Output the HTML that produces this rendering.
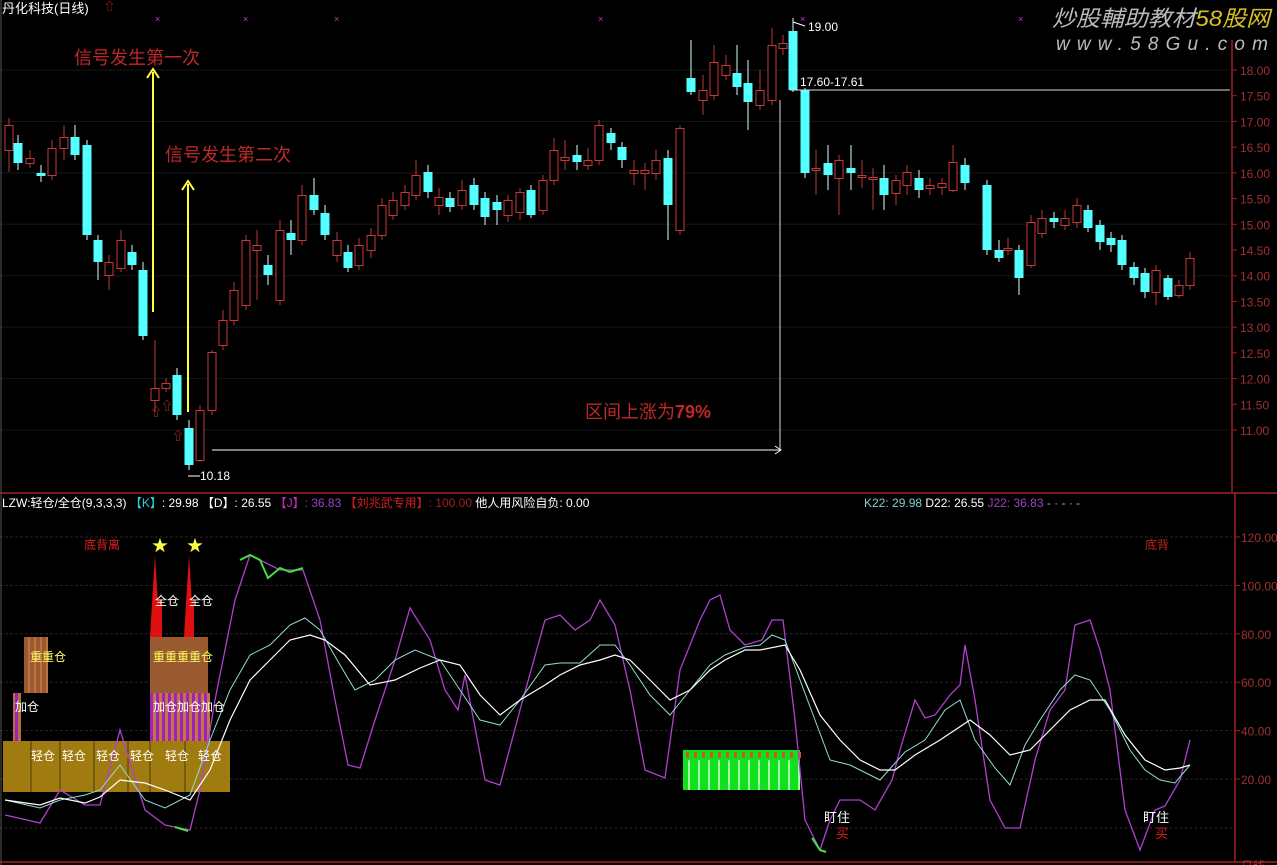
<!DOCTYPE html>
<html><head><meta charset="utf-8"><style>
body{margin:0;background:#000;width:1277px;height:865px;overflow:hidden}
svg{display:block}
text{font-family:"Liberation Sans","Noto Sans CJK SC",sans-serif}
</style></head><body>
<svg id="s" width="1277" height="865" viewBox="0 0 1277 865" xmlns="http://www.w3.org/2000/svg">
<rect width="1277" height="865" fill="#000"/>
<g id="grid"></g>
<line x1="1232" y1="40" x2="1232" y2="492" stroke="#a02020" stroke-width="1.5"/>
<line x1="1235" y1="492" x2="1235" y2="862" stroke="#a02020" stroke-width="1.5"/>
<line x1="0" y1="493" x2="1277" y2="493" stroke="#a02020" stroke-width="1.5"/>
<line x1="0" y1="862" x2="1277" y2="862" stroke="#a02020" stroke-width="1.5"/>
<line x1="1" y1="0" x2="1" y2="865" stroke="#555" stroke-width="1"/>
<g id="c"></g>
<g id="low"></g>
<text x="2" y="13" fill="#fff" font-size="13">丹化科技(日线)</text>
<text x="104" y="10" fill="#d02020" font-size="11">⇧</text>
<g fill="#c040c0" font-size="9"><text x="155" y="22">×</text><text x="243" y="22">×</text><text x="334" y="22">×</text><text x="598" y="22">×</text><text x="1018" y="22">×</text><text x="800" y="22">×</text></g>
<text x="74" y="64" fill="#c02828" font-size="18">信号发生第一次</text>
<text x="165" y="161" fill="#c02828" font-size="18">信号发生第二次</text>
<text x="585" y="418" fill="#c02828" font-size="18">区间上涨为<tspan font-weight="bold">79%</tspan></text>
<line x1="153" y1="72" x2="153" y2="312" stroke="#ffff40" stroke-width="2"/>
<path d="M147 78 L153 69 L159 78" fill="none" stroke="#ffff40" stroke-width="2"/>
<line x1="188" y1="184" x2="188" y2="412" stroke="#ffff40" stroke-width="2"/>
<path d="M182 190 L188 181 L194 190" fill="none" stroke="#ffff40" stroke-width="2"/>
<line x1="212" y1="450" x2="780" y2="450" stroke="#fff" stroke-width="1"/>
<path d="M775 446 L781 450 L775 454" fill="none" stroke="#fff"/>
<line x1="780" y1="100" x2="780" y2="450" stroke="#ddd" stroke-width="1"/>
<line x1="790" y1="90" x2="1230" y2="90" stroke="#ddd" stroke-width="1"/>
<text x="808" y="31" fill="#fff" font-size="12">19.00</text>
<path d="M793 22 L805 26" stroke="#fff"/>
<text x="800" y="86" fill="#fff" font-size="12">17.60-17.61</text>
<text x="200" y="480" fill="#fff" font-size="12">10.18</text>
<path d="M188 476 L200 476" stroke="#fff"/>
<text x="1052" y="26" fill="#bbb" font-size="22" font-style="italic" textLength="218" lengthAdjust="spacingAndGlyphs">炒股輔助教材<tspan fill="#d8c020">58股网</tspan></text>
<text x="1056" y="50" fill="#bbb" font-size="19" font-style="italic" textLength="212" lengthAdjust="spacing">www.58Gu.com</text>
<g id="ax" fill="#a03030" font-size="12"></g>
<text x="2" y="507" font-size="12" fill="#fff">LZW:轻仓/全仓(9,3,3,3) <tspan fill="#30d0d0">【K】</tspan>: 29.98 <tspan fill="#fff">【D】</tspan>: 26.55 <tspan fill="#c030c0">【J】</tspan><tspan fill="#a040c0">: 36.83</tspan> <tspan fill="#d02020">【刘兆武专用】</tspan><tspan fill="#a02020">: 100.00</tspan> 他人用风险自负: 0.00</text>
<text x="864" y="507" font-size="12" fill="#80d0d0">K22: 29.98 <tspan fill="#fff">D22: 26.55</tspan> <tspan fill="#a040c0">J22: 36.83</tspan><tspan fill="#aaa"> - · - · -</tspan></text>
</svg>
<script>
var NS="http://www.w3.org/2000/svg";
function el(p,t,a,txt){var e=document.createElementNS(NS,t);for(var k in a)e.setAttribute(k,a[k]);if(txt)e.textContent=txt;p.appendChild(e);return e;}
var g=document.getElementById('grid'),ax=document.getElementById('ax');
for(var i=0;i<15;i++){var p=18-i*0.5,y=70+(18-p)*51.43;
 if(i%2==0) el(g,'line',{x1:0,y1:y,x2:1230,y2:y,stroke:'#161616'});
 el(ax,'text',{x:1240,y:y+5},p.toFixed(2));el(g,'line',{x1:1232,y1:y,x2:1237,y2:y,stroke:'#a02020'});}
[120,100,80,60,40,20].forEach(function(v){var y=537+(120-v)*2.42;
 el(g,'line',{x1:0,y1:y,x2:1232,y2:y,stroke:'#262626','stroke-dasharray':'3 2'});
 el(ax,'text',{x:1241,y:y+5},v.toFixed(2));el(g,'line',{x1:1235,y1:y,x2:1240,y2:y,stroke:'#a02020'});});
el(g,'line',{x1:0,y1:828,x2:1232,y2:828,stroke:'#602020','stroke-dasharray':'2 3'});
el(ax,'text',{x:1241,y:870},'日线');
var C=[[9,150,125,118,172],[18,143,163,135,170],[30,163,158,150,168],[41,173,176,165,182],[52,175,148,140,180],[64,148,137,125,160],[75,137,155,125,160],[87,145,235,140,240],[98,240,262,235,280],[109,275,262,255,290],[121,268,240,230,272],[132,252,265,245,270],[143,270,336,262,340],[155,400,388,340,412],[166,388,383,378,392],[177,375,415,368,420],[189,428,465,420,470],[200,460,410,405,462],[212,410,352,350,415],[223,345,320,310,350],[234,320,290,282,325],[246,305,240,235,310],[257,250,245,230,300],[268,265,275,255,285],[280,300,230,220,305],[291,233,240,220,255],[302,240,195,185,245],[314,195,210,178,215],[325,213,235,205,240],[337,255,240,232,262],[348,252,268,245,272],[359,265,245,238,270],[371,250,235,228,258],[382,235,205,198,240],[393,215,200,192,220],[405,205,192,185,210],[416,195,175,160,200],[428,172,192,165,198],[439,205,197,188,215],[450,198,207,192,212],[462,205,190,180,210],[474,185,205,178,210],[485,198,217,192,225],[497,202,210,195,225],[508,215,200,195,222],[520,212,192,188,220],[531,190,215,185,218],[543,210,180,175,215],[554,180,150,138,185],[565,160,157,140,170],[577,155,162,145,170],[588,165,160,148,170],[599,160,125,120,165],[611,133,143,128,150],[622,147,160,142,168],[634,173,170,160,185],[645,173,170,163,190],[656,173,160,150,180],[668,158,205,150,240],[680,230,128,125,235],[691,78,92,40,95],[703,100,90,75,115],[714,95,62,45,100],[726,75,65,55,80],[737,73,87,45,95],[748,83,102,60,130],[760,105,90,70,110],[772,100,45,28,105],[783,48,43,35,55],[793,31,90,18,92],[805,90,173,88,178],[816,170,168,150,195],[828,163,175,145,190],[839,178,160,155,215],[851,168,173,145,190],[862,177,175,160,188],[873,178,177,168,210],[884,178,195,165,210],[896,193,180,175,205],[907,185,172,165,195],[919,178,190,170,198],[930,188,185,178,195],[942,187,183,178,195],[953,190,162,145,192],[965,165,183,158,190],[987,185,250,180,255],[999,250,258,240,262],[1008,250,248,238,255],[1019,250,278,245,295],[1031,265,222,215,268],[1042,233,218,210,238],[1054,218,222,212,228],[1065,225,218,210,230],[1077,222,205,198,228],[1088,210,228,205,232],[1100,225,242,220,250],[1111,238,245,232,252],[1122,240,265,235,270],[1134,267,278,262,285],[1145,273,292,268,298],[1156,292,270,265,305],[1168,278,297,275,300],[1179,295,285,280,298],[1190,285,258,252,290]];
var cg=document.getElementById('c');
C.forEach(function(d){var x=d[0],o=d[1],c=d[2],down=c>o,t=Math.min(o,c),b=Math.max(o,c),h=Math.max(b-t,2);
 var col=down?'#54ffff':'#c83838';
 el(cg,'line',{x1:x,y1:d[3],x2:x,y2:d[4],stroke:down?'#d0ffff':'#b83838','stroke-width':1});
 if(down) el(cg,'rect',{x:x-4.5,y:t,width:9,height:h,fill:col});
 else el(cg,'rect',{x:x-4,y:t+0.5,width:8,height:h,fill:'#000',stroke:col,'stroke-width':1});});
[[155,410],[166,404],[177,434]].forEach(function(a){el(cg,'text',{x:a[0]-5,y:a[1]+6,fill:'#e03030','font-size':12},'⇧');});
var L=document.getElementById('low');
el(L,'rect',{x:3,y:741,width:227,height:51,fill:'#a07c10'});
[31,60,94,128,150,185].forEach(function(x){el(L,'line',{x1:x,y1:741,x2:x,y2:792,stroke:'#4a3a08'});});
el(L,'rect',{x:24,y:637,width:23,height:56,fill:'#9a5a30'});
for(var x=28;x<47;x+=6)el(L,'rect',{x:x,y:637,width:2,height:56,fill:'#c07040'});
el(L,'rect',{x:13,y:693,width:8,height:48,fill:'#b07040'});el(L,'rect',{x:15,y:693,width:3,height:48,fill:'#a020c0'});
el(L,'rect',{x:150,y:637,width:58,height:56,fill:'#9a5a30'});
for(var x=150;x<208;x+=6){el(L,'rect',{x:x,y:693,width:3,height:48,fill:'#a020c0'});el(L,'rect',{x:x+3,y:693,width:3,height:48,fill:'#c07840'});}
el(L,'path',{d:'M150 637 L155 555 L160 637 Z',fill:'#e01010'});
el(L,'path',{d:'M184 637 L189 555 L194 637 Z',fill:'#e01010'});
el(L,'path',{d:'M153 637 L153 600 L162 600 L162 637Z',fill:'#e01010'});
el(L,'path',{d:'M186 637 L186 600 L194 600 L194 637Z',fill:'#e01010'});
el(L,'rect',{x:683,y:750,width:117,height:40,fill:'#10e020'});
for(var x=688;x<800;x+=10)el(L,'rect',{x:x,y:760,width:2,height:30,fill:'#a0ffa0'});
for(var x=686;x<800;x+=8)el(L,'rect',{x:x,y:752,width:3,height:6,fill:'#c06020'});
function pl(pts,col,w){el(L,'polyline',{points:pts.map(function(p){return p.join(',')}).join(' '),fill:'none',stroke:col,'stroke-width':w||1});}
var J=[[5,815],[40,823],[60,790],[85,805],[100,805],[120,730],[145,810],[165,825],[180,828],[190,830],[200,790],[215,700],[235,600],[250,555],[260,560],[280,570],[303,570],[320,620],[335,700],[348,765],[360,768],[375,720],[395,660],[410,608],[430,640],[445,690],[458,710],[465,675],[485,780],[500,785],[520,710],[545,620],[560,615],[575,630],[590,620],[600,600],[615,625],[630,690],[645,770],[665,778],[680,670],[700,620],[710,600],[720,595],[730,630],[745,645],[762,640],[772,620],[783,620],[795,720],[805,820],[820,850],[830,820],[840,800],[860,800],[875,810],[892,780],[900,750],[915,700],[925,718],[935,715],[950,695],[960,685],[965,645],[975,700],[990,800],[1005,828],[1020,828],[1035,760],[1050,710],[1065,690],[1075,625],[1090,620],[1100,650],[1110,690],[1125,810],[1140,850],[1155,810],[1165,806],[1180,780],[1190,740]];
var K=[[5,800],[40,808],[60,800],[85,795],[100,790],[120,765],[145,800],[165,808],[190,795],[210,740],[230,690],[250,655],[270,645],[290,625],[305,618],[320,630],[340,665],[355,690],[375,680],[395,660],[415,650],[440,660],[460,690],[480,720],[500,725],[520,700],[545,665],[560,663],[580,663],[600,645],[615,645],[630,665],[650,695],[670,715],[690,690],[710,665],[725,655],[745,647],[760,645],[772,635],[785,640],[800,680],[815,720],[830,760],[850,765],[870,775],[880,780],[905,752],[925,740],[945,710],[960,700],[975,740],[995,768],[1010,785],[1025,745],[1040,720],[1060,690],[1075,675],[1090,680],[1110,710],[1130,750],[1145,770],[1160,780],[1175,783],[1190,765]];
var D=[[5,800],[40,805],[60,798],[85,803],[100,797],[120,780],[145,783],[165,790],[190,800],[210,770],[230,720],[250,680],[270,660],[290,640],[310,635],[325,640],[345,655],[370,685],[395,680],[420,668],[440,660],[460,665],[480,695],[500,715],[520,700],[545,685],[560,675],[580,665],[600,660],[615,655],[630,660],[650,680],[670,700],[690,690],[710,670],[725,660],[745,650],[760,650],[785,645],[800,670],[820,715],[840,740],[860,760],[880,770],[895,770],[915,755],[940,740],[955,730],[970,720],[990,735],[1010,755],[1030,750],[1050,730],[1070,710],[1090,700],[1105,700],[1125,735],[1145,760],[1165,770],[1180,768],[1190,765]];
pl(J,'#b040d0',1.3);pl(K,'#90e0d0',1);pl(D,'#ffffff',1.2);
pl([[240,560],[250,555],[260,560],[268,578],[280,568],[290,572],[303,568]],'#40e040',2);
pl([[175,827],[188,831]],'#40e040',2);pl([[812,838],[820,850],[826,852]],'#40e040',2);
function tx(x,y,s,col,fs){el(L,'text',{x:x,y:y,fill:col,'font-size':fs||12},s);}
tx(84,549,'底背离','#e02020',12);tx(1145,549,'底背','#c02020',12);
tx(152,551,'★','#ffff40',16);tx(187,551,'★','#ffff40',16);
tx(155,605,'全仓','#fff');tx(189,605,'全仓','#fff');
tx(30,661,'重重仓','#ffff60');tx(153,661,'重重重重仓','#ffff60');
tx(15,711,'加仓','#fff');tx(153,711,'加仓加仓加仓','#fff');
[31,62,96,130,165,198].forEach(function(x){tx(x,760,'轻仓','#fff');});
tx(824,822,'盯住','#fff',13);tx(836,838,'买','#e02020',13);
tx(1143,822,'盯住','#fff',13);tx(1155,838,'买','#e02020',13);
</script>
</body></html>
